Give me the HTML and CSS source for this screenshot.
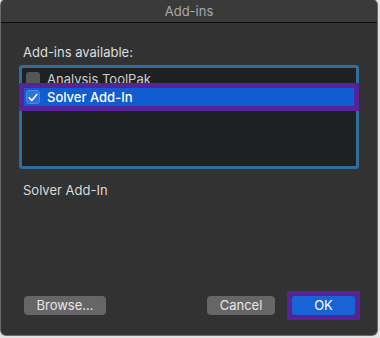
FILE: index.html
```html
<!DOCTYPE html>
<html>
<head>
<meta charset="utf-8">
<link rel="stylesheet" href="styles.css">
</head>
<body>
<div class="window">
  <div class="titlebar">Add-ins</div>
  <div class="content">
    <div class="label">Add-ins available:</div>
    <div class="list">
      <div class="row">
        <span class="check"></span>
        <span class="row-text">Analysis ToolPak</span>
      </div>
      <div class="row selected">
        <span class="check checked">
          <svg width="10" height="9" viewBox="0 0 10 9"><path d="M1.2 4.8 L3.8 7.4 L8.8 1.4" fill="none" stroke="#fff" stroke-width="1.6" stroke-linecap="round" stroke-linejoin="round"/></svg>
        </span>
        <span class="row-text">Solver Add-In</span>
      </div>
    </div>
    <div class="desc">Solver Add-In</div>
    <div class="spacer"></div>
    <div class="buttons">
      <button class="btn browse">Browse...</button>
      <div class="right">
        <button class="btn cancel">Cancel</button>
        <span class="mark"><button class="btn ok">OK</button></span>
      </div>
    </div>
  </div>
</div>
</body>
</html>
```

FILE: styles.css
```css
html, body {
  margin: 0;
  padding: 0;
  background: #e2e2e2;
}
body {
  width: 380px;
  height: 338px;
  overflow: hidden;
  font-family: Inter, "Liberation Sans", sans-serif;
  font-size: 13px;
}
.window {
  margin-left: 1px;
  width: 376px;
  height: 335px;
  background: #323232;
  border-radius: 5px;
  box-shadow: 0 0 0 1px #6a6a6a;
  display: flex;
  flex-direction: column;
  overflow: hidden;
}
.titlebar {
  height: 22px;
  line-height: 22px;
  text-align: center;
  color: #a9a9a9;
  background: #3a3a3a;
  border-bottom: 1px solid #0c0c0c;
  flex: none;
}
.content {
  flex: 1;
  display: flex;
  flex-direction: column;
  padding: 21px 21px 20px 21px;
}
.label {
  line-height: 16px;
  color: #dedede;
  padding-left: 1px;
}
.list {
  margin-top: 5px;
  margin-left: -3px;
  margin-right: -3px;
  height: 96px;
  border: 3px solid #2f6d9c;
  border-radius: 3px;
  background: #1f2022;
  padding: 1px 2px;
  display: flex;
  flex-direction: column;
}
.row {
  height: 19px;
  display: flex;
  align-items: center;
  color: #cfcfcf;
}
.row.selected {
  background: #0f5dcf;
  color: #ffffff;
  outline: 5px solid #55249a;
  height: 18px;
  font-weight: 500;
}
.check {
  width: 14px;
  height: 14px;
  margin-left: 2px;
  margin-right: 7px;
  border-radius: 3px;
  background: #565656;
  display: flex;
  align-items: center;
  justify-content: center;
  box-sizing: border-box;
}
.check.checked {
  background: #2b73dc;
  border: 1px solid #4a8ae6;
}
.desc {
  margin-top: 13px;
  line-height: 16px;
  color: #dadada;
  padding-left: 1px;
}
.spacer {
  flex: 1;
}
.buttons {
  display: flex;
  justify-content: space-between;
  align-items: center;
}
.right {
  display: flex;
  align-items: center;
  gap: 12px;
  margin-right: -4px;
}
.btn {
  font-family: inherit;
  font-size: 13px;
  height: 19px;
  border: none;
  border-radius: 4px;
  padding: 0;
  color: #e6e6e6;
  background: #666666;
  line-height: 19px;
  display: block;
}
.browse {
  margin-left: 2px;
  width: 82px;
}
.cancel {
  width: 68px;
}
.mark {
  display: block;
  border: 5px solid #55249a;
  margin: -5px 0;
}
.ok {
  width: 63px;
  background: #1a63d6;
  color: #ffffff;
  border-radius: 2px;
}
```
